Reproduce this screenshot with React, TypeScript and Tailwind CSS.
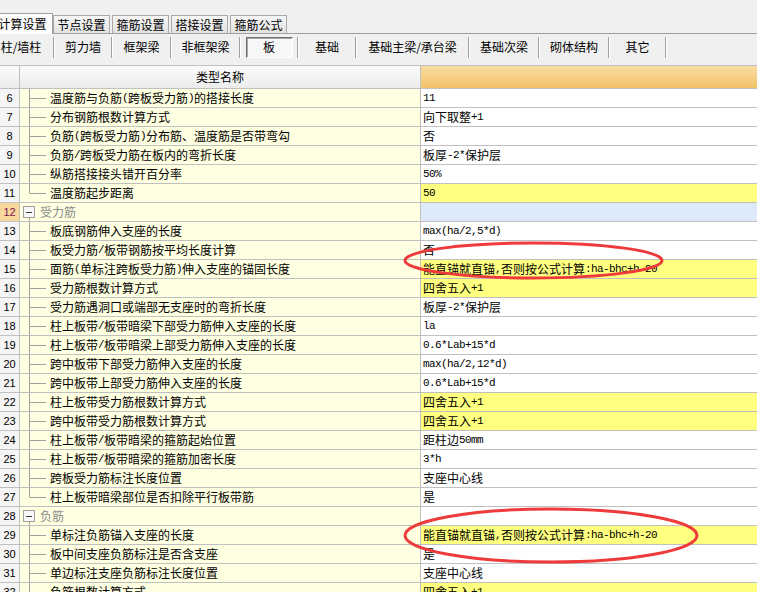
import React from 'react';

type Row = {
  n: number;
  name: string;
  value?: string;
  hl?: boolean;
  group?: boolean;
  last?: boolean;
  sel?: boolean;
};

const rows: Row[] = [
  { n: 6, name: '温度筋与负筋(跨板受力筋)的搭接长度', value: '11' },
  { n: 7, name: '分布钢筋根数计算方式', value: '向下取整+1' },
  { n: 8, name: '负筋(跨板受力筋)分布筋、温度筋是否带弯勾', value: '否' },
  { n: 9, name: '负筋/跨板受力筋在板内的弯折长度', value: '板厚-2*保护层' },
  { n: 10, name: '纵筋搭接接头错开百分率', value: '50%' },
  { n: 11, name: '温度筋起步距离', value: '50', hl: true, last: true },
  { n: 12, name: '受力筋', group: true, sel: true },
  { n: 13, name: '板底钢筋伸入支座的长度', value: 'max(ha/2,5*d)' },
  { n: 14, name: '板受力筋/板带钢筋按平均长度计算', value: '否' },
  { n: 15, name: '面筋(单标注跨板受力筋)伸入支座的锚固长度', value: '能直锚就直锚,否则按公式计算:ha-bhc+h-20', hl: true },
  { n: 16, name: '受力筋根数计算方式', value: '四舍五入+1', hl: true },
  { n: 17, name: '受力筋遇洞口或端部无支座时的弯折长度', value: '板厚-2*保护层' },
  { n: 18, name: '柱上板带/板带暗梁下部受力筋伸入支座的长度', value: 'la' },
  { n: 19, name: '柱上板带/板带暗梁上部受力筋伸入支座的长度', value: '0.6*Lab+15*d' },
  { n: 20, name: '跨中板带下部受力筋伸入支座的长度', value: 'max(ha/2,12*d)' },
  { n: 21, name: '跨中板带上部受力筋伸入支座的长度', value: '0.6*Lab+15*d' },
  { n: 22, name: '柱上板带受力筋根数计算方式', value: '四舍五入+1', hl: true },
  { n: 23, name: '跨中板带受力筋根数计算方式', value: '四舍五入+1', hl: true },
  { n: 24, name: '柱上板带/板带暗梁的箍筋起始位置', value: '距柱边50mm' },
  { n: 25, name: '柱上板带/板带暗梁的箍筋加密长度', value: '3*h' },
  { n: 26, name: '跨板受力筋标注长度位置', value: '支座中心线' },
  { n: 27, name: '柱上板带暗梁部位是否扣除平行板带筋', value: '是', last: true },
  { n: 28, name: '负筋', group: true },
  { n: 29, name: '单标注负筋锚入支座的长度', value: '能直锚就直锚,否则按公式计算:ha-bhc+h-20', hl: true },
  { n: 30, name: '板中间支座负筋标注是否含支座', value: '是' },
  { n: 31, name: '单边标注支座负筋标注长度位置', value: '支座中心线' },
  { n: 32, name: '负筋根数计算方式', value: '四舍五入+1', hl: true },
];

const tabs = ['节点设置', '箍筋设置', '搭接设置', '箍筋公式'];

// widths measured between the separators
const tools = [
  { label: '柱/墙柱', w: 'w-[64px] -ml-[11px]' },
  { label: '剪力墙', w: 'w-[56px]' },
  { label: '框架梁', w: 'w-[57px]' },
  { label: '非框架梁', w: 'w-[67px]' },
  { label: '板', w: 'w-[56px]', active: true },
  { label: '基础', w: 'w-[56px]' },
  { label: '基础主梁/承台梁', w: 'w-[111px]' },
  { label: '基础次梁', w: 'w-[68px]' },
  { label: '砌体结构', w: 'w-[68px]' },
  { label: '其它', w: 'w-[55px]' },
];

// ascii runs get the narrow mono face, like the half-width glyphs of the original
const Txt = ({ s }: { s: string }) => (
  <>
    {s
      .split(/([\x20-\x7e]+)/)
      .filter(Boolean)
      .map((p, i) =>
        /^[\x20-\x7e]+$/.test(p) ? (
          <span key={i} className="font-['Liberation_Mono',monospace] text-[11px] tracking-[-0.6px]">
            {p}
          </span>
        ) : (
          <span key={i}>{p}</span>
        )
      )}
  </>
);

const Sep = () => <div className="w-[2px] h-[21px] border-l border-r border-l-[#a0a0a0] border-r-white shrink-0" />;

const TreeLine = ({ last }: { last?: boolean }) => (
  <svg width="30" height="18" className="shrink-0">
    <line x1="9.5" y1="0" x2="9.5" y2={last ? 9.5 : 18} stroke="#a0a0a0" />
    <line x1="10" y1="9.5" x2="26" y2="9.5" stroke="#a0a0a0" />
  </svg>
);

const GroupBox = () => (
  <svg width="20" height="18" className="shrink-0">
    <rect x="3.5" y="3.5" width="11" height="11" fill="#f8f8f8" stroke="#a0a0a0" />
    <line x1="6" y1="9.5" x2="12" y2="9.5" stroke="#404040" />
    <line x1="9.5" y1="15" x2="9.5" y2="18" stroke="#a0a0a0" />
  </svg>
);

export default function App() {
  return (
    <div className="relative w-[757px] h-[592px] overflow-hidden bg-[#f0f0f0] text-[12px] text-black font-['Noto_Sans_CJK_SC',sans-serif]">
      {/* tab strip */}
      <div className="flex items-end h-[34px] border-b border-[#a0a0a0]">
        <div className="-ml-[8px] -mb-px h-[21px] w-[61px] bg-[#fcfcfc] border border-b-0 border-[#a0a0a0] flex items-center justify-center leading-none shrink-0">
          计算设置
        </div>
        <div className="flex gap-[2px]">
          {tabs.map(t => (
            <div
              key={t}
              className="h-[18px] w-[57px] border border-b-0 border-[#a8a8a8] bg-gradient-to-b from-[#f6f6f6] to-[#e2e2e2] flex items-center justify-center leading-none"
            >
              {t}
            </div>
          ))}
        </div>
      </div>

      {/* component toolbar */}
      <div className="flex items-center h-[26px]">
        {tools.map(t => (
          <React.Fragment key={t.label}>
            <div className={`${t.w} h-[21px] flex items-center justify-center shrink-0 leading-none`}>
              {t.active ? (
                <div className="w-[47px] h-[21px] flex items-center justify-center bg-[#f7f7f7] border border-t-[#6e6e6e] border-l-[#6e6e6e] border-b-white border-r-white shadow-[inset_1px_1px_0_#a8a8a8]">
                  {t.label}
                </div>
              ) : (
                t.label
              )}
            </div>
            <Sep />
          </React.Fragment>
        ))}
      </div>
      <div className="h-[5px]" />

      {/* grid */}
      <div className="border-t border-[#c0c0c0] bg-white">
        <div className="flex h-[23px] border-b border-[#c0c0c0]">
          <div className="w-[20px] shrink-0 border-r border-[#c0c0c0] bg-gradient-to-b from-[#fbfbfb] to-[#ececec]" />
          <div className="w-[401px] shrink-0 border-r border-[#c0c0c0] bg-gradient-to-b from-[#fbfbfb] to-[#ececec] flex items-center justify-center leading-none">
            类型名称
          </div>
          <div className="flex-1 bg-gradient-to-b from-[#f9dca2] to-[#f1c266]" />
        </div>

        {rows.map(r => (
          <div key={r.n} className="flex h-[19px] border-b border-[#c0c0c0] leading-[18px]">
            <div
              className={`w-[20px] shrink-0 border-r border-[#c0c0c0] flex items-center justify-center font-['Liberation_Sans',sans-serif] text-[11px] ${
                r.sel ? 'bg-[#f9d69c] text-[#7a1050]' : 'bg-[#f5f5f5]'
              }`}
            >
              {r.n}
            </div>
            <div className="w-[401px] shrink-0 border-r border-[#c0c0c0] bg-[#ffffe1] flex items-center whitespace-nowrap overflow-hidden">
              {r.group ? (
                <>
                  <GroupBox />
                  <span className="text-[#8c8c8c]">{r.name}</span>
                </>
              ) : (
                <>
                  <TreeLine last={r.last} />
                  <Txt s={r.name} />
                </>
              )}
            </div>
            <div
              className={`flex-1 pl-[2px] flex items-center whitespace-nowrap overflow-hidden ${
                r.sel ? 'bg-[#ddeafa]' : r.hl ? 'bg-[#ffff80]' : 'bg-white'
              }`}
            >
              {r.value && <Txt s={r.value} />}
            </div>
          </div>
        ))}
      </div>

      {/* red marks drawn over the grid */}
      <svg className="absolute inset-0 pointer-events-none" width="757" height="592">
        <ellipse cx="533.5" cy="260.5" rx="128.5" ry="17.5" fill="none" stroke="#ee3a3a" strokeWidth="3" />
        <ellipse cx="551" cy="535.5" rx="146" ry="26.5" fill="none" stroke="#ee3a3a" strokeWidth="3" />
      </svg>
    </div>
  );
}
